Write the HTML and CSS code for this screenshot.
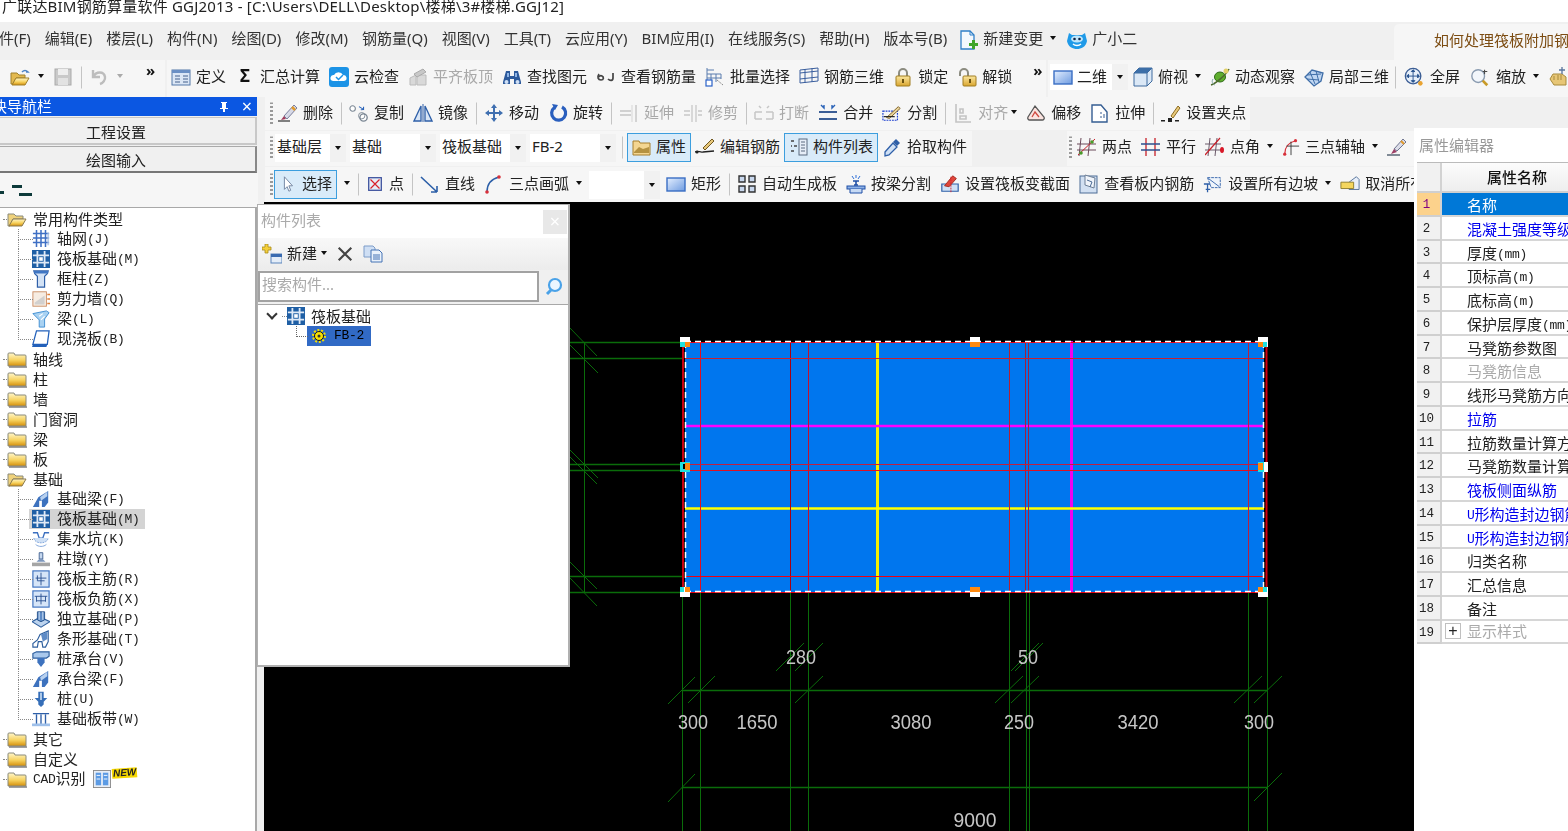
FILE: index.html
```html
<!DOCTYPE html>
<html lang="zh-CN">
<head>
<meta charset="utf-8">
<title>广联达BIM钢筋算量软件 GGJ2013</title>
<link rel="stylesheet" href="styles.css">
</head>
<body>
<svg class="defs" aria-hidden="true">
  <defs>
    <linearGradient id="gf" x1="0" y1="0" x2="0" y2="1"><stop offset="0" stop-color="#fff7cc"/><stop offset=".55" stop-color="#f7d25e"/><stop offset="1" stop-color="#d48f0c"/></linearGradient>
    <linearGradient id="gb" x1="0" y1="0" x2="1" y2="1"><stop offset="0" stop-color="#e4efff"/><stop offset="1" stop-color="#6e9be0"/></linearGradient>
    <linearGradient id="gy" x1="0" y1="0" x2="0" y2="1"><stop offset="0" stop-color="#fbe7a0"/><stop offset="1" stop-color="#d9a52e"/></linearGradient>
  </defs>
  <symbol id="fold" viewBox="0 0 20 20"><path d="M1 5a1 1 0 0 1 1-1h5l1 2h10a1 1 0 0 1 1 1v10H1z" fill="url(#gf)" stroke="#8a8a7a"/><path d="M2 18h18" stroke="#777" stroke-width="1.4"/></symbol>
  <symbol id="foldo" viewBox="0 0 20 20"><path d="M1 5h6l2 2h7v3H6L3 17H1z" fill="#efd27c" stroke="#8a8a7a"/><path d="M6 10h13l-4 7H2z" fill="url(#gf)" stroke="#8a7a50"/></symbol>
  <symbol id="fopen" viewBox="0 0 20 20"><path d="M1 6h6l2 2h6v3H6L3 17H1z" fill="#e3b94f" stroke="#a0802c"/><path d="M6 11h13l-4 7H2z" fill="url(#gf)" stroke="#a0802c"/><path d="M12 5c2-2 4-2 6 0l-2 0" fill="none" stroke="#4d83c6" stroke-width="1.5"/></symbol>
  <symbol id="save" viewBox="0 0 20 20"><rect x="2" y="2" width="16" height="16" fill="#c9c9c9" stroke="#aaa"/><rect x="5" y="2" width="10" height="6" fill="#eee"/><rect x="5" y="11" width="10" height="7" fill="#e2e2e2"/></symbol>
  <symbol id="undo" viewBox="0 0 20 20"><path d="M4 3v7h7M4 10c3-6 11-6 12 0 .5 3-2 6-5 7" fill="none" stroke="#bdbdbd" stroke-width="2.4"/></symbol>
  <symbol id="def" viewBox="0 0 20 20"><rect x="1" y="3" width="18" height="15" fill="#dbe6f5" stroke="#5578a8"/><rect x="1" y="3" width="18" height="3" fill="#6a8fc4"/><path d="M4 9h5M4 12h5M4 15h5M12 9h5M12 12h5M12 15h5" stroke="#44618c"/></symbol>
  <symbol id="cloud" viewBox="0 0 20 20"><rect x="0" y="0" width="20" height="20" rx="3" fill="#1c93e6"/><path d="M4 14a3 3 0 0 1 1-6 5 5 0 0 1 9 0 3 3 0 0 1 1 6z" fill="#fff"/><path d="M7 10l2.500 2.500L14 8" fill="none" stroke="#1c93e6" stroke-width="1.5"/></symbol>
  <symbol id="flat" viewBox="0 0 20 20"><path d="M2 18V11l6-3v10zM9 18V8h9v10z" fill="#d9d9d9" stroke="#bbb"/><path d="M6 7l9-5 3 3-9 5z" fill="#c8c8c8" stroke="#aaa"/></symbol>
  <symbol id="bino" viewBox="0 0 20 20"><path d="M1 15l3-11h4v5h4V4h4l3 11v2h-7v-5H8v5H1z" fill="#2d5a9c"/><circle cx="4.500" cy="15" r="2" fill="#cfe0f6"/><circle cx="15.500" cy="15" r="2" fill="#cfe0f6"/><path d="M5 6h2v4H5zM13 6h2v4h-2z" fill="#8eb4e6"/></symbol>
  <symbol id="glass" viewBox="0 0 20 20"><path d="M3 7c-2 3-1 6 2 6s3-3 1-4-3 1-3 1M17 6v5c0 3-3 3-5 1" fill="none" stroke="#444" stroke-width="1.700"/></symbol>
  <symbol id="batch" viewBox="0 0 20 20"><path d="M2 1v13M2 3h7M2 7h14M2 11h14M6 7v7M11 7v8M16 7v5" fill="none" stroke="#5b7cae"/><rect x="1" y="13" width="6" height="6" fill="#fff" stroke="#2a62c8" stroke-width="1.200"/><path d="M12 13l6 5" stroke="#888" stroke-dasharray="2 1"/></symbol>
  <symbol id="r3d" viewBox="0 0 20 20"><path d="M1 3v13M19 1v13M1 6l18-2M1 12l18-2M6 2v14M13 1v14M1 16l18-2M1 3l18-2" fill="none" stroke="#3b5f9e"/></symbol>
  <symbol id="lock" viewBox="0 0 20 20"><path d="M6 9V6a4 4 0 0 1 8 0v3" fill="none" stroke="#8c8c80" stroke-width="2"/><rect x="3" y="9" width="14" height="10" rx="1" fill="url(#gy)" stroke="#a07c20"/><rect x="9" y="12" width="2" height="4" fill="#6b5210"/></symbol>
  <symbol id="unlock" viewBox="0 0 20 20"><path d="M3 9V6a4 4 0 0 1 8 0v3" fill="none" stroke="#8c8c80" stroke-width="2"/><rect x="6" y="9" width="13" height="10" rx="1" fill="url(#gy)" stroke="#a07c20"/><rect x="12" y="12" width="2" height="4" fill="#6b5210"/></symbol>
  <symbol id="r2d" viewBox="0 0 20 20"><rect x="1" y="4" width="18" height="13" fill="url(#gb)" stroke="#3a6ec4" stroke-width="1.400"/></symbol>
  <symbol id="cube" viewBox="0 0 20 20"><path d="M1 6l5-5h13v13l-5 5H1z" fill="#dbe8f6" stroke="#3e6a9e"/><path d="M1 6h13v13M14 6l5-5" fill="none" stroke="#3e6a9e"/><path d="M6 1h13l-5 5H1z" fill="#3d6fa8"/></symbol>
  <symbol id="orbit" viewBox="0 0 20 20"><ellipse cx="10" cy="10" rx="5.500" ry="5" fill="#5fae2e" stroke="#2f6c18"/><path d="M1 18C5 17 16 8 19 2" fill="none" stroke="#4d6a2c" stroke-width="1.500"/><circle cx="16" cy="4" r="2.500" fill="#e3d06a"/><path d="M3 12c-2 3 0 5 2 6" fill="none" stroke="#8aa"/></symbol>
  <symbol id="loc3d" viewBox="0 0 20 20"><path d="M1 10l7-7 11 3-2 8-7 5z" fill="#bfd6f2" stroke="#3f6ea8" stroke-width="1.300"/><path d="M6 5l5 12M12 4l3 11M3 8l14-1M3 12l12 1" stroke="#3f6ea8"/></symbol>
  <symbol id="full" viewBox="0 0 22 22"><circle cx="10" cy="10" r="8.500" fill="#e6effa" stroke="#3b5d94" stroke-width="1.500"/><path d="M10 4v12M4 10h12M10 3l-2 2h4zM10 17l-2-2h4zM3 10l2-2v4zM17 10l-2-2v4z" stroke="#24508c" fill="#24508c"/><circle cx="18" cy="18" r="2.500" fill="#e9a331"/></symbol>
  <symbol id="zoom" viewBox="0 0 22 22"><circle cx="9" cy="10" r="7" fill="#f2f6fb" stroke="#8a9bb0" stroke-width="1.500"/><path d="M14 15l5 5" stroke="#c89a28" stroke-width="3"/><path d="M16 3v5M14 5h5" stroke="#4a4a4a" stroke-width="1.200"/></symbol>
  <symbol id="hand" viewBox="0 0 20 20"><path d="M2 12l3-5h9l4 3v8H6z" fill="#e7c676" stroke="#a78a3c"/><path d="M6 9v4M10 8v5M13 8v5" stroke="#a78a3c"/><path d="M14 0v7M11 3h6" stroke="#58749c" stroke-width="1.300"/></symbol>
  <symbol id="erase" viewBox="0 0 20 20"><path d="M6 13L16 2l3 3L9 16z" fill="#d7d9e6" stroke="#7a7f9c"/><path d="M14 4l3 3" stroke="#e29b2c" stroke-width="2.500"/><path d="M6 13l-3 4 5-1z" fill="#a03a5a"/><path d="M0 18h12" stroke="#333" stroke-width="1.200"/></symbol>
  <symbol id="copy" viewBox="0 0 22 20"><circle cx="4" cy="5" r="3" fill="#fff" stroke="#7b8794" stroke-width="1.200"/><circle cx="16" cy="15" r="4" fill="#fff" stroke="#7b8794" stroke-width="1.500"/><circle cx="14" cy="13" r="3.500" fill="none" stroke="#7b8794"/><path d="M11 3l5 3v-3M16 6l-3 .5" stroke="#2a63b8" fill="none" stroke-width="1.200"/></symbol>
  <symbol id="mirror" viewBox="0 0 20 20"><path d="M8 3L1 18h7zM12 3l7 15h-7z" fill="#d8e5f6" stroke="#2e5fa8" stroke-width="1.300"/><path d="M10 1v18" stroke="#2e5fa8"/></symbol>
  <symbol id="move" viewBox="0 0 20 20"><path d="M10 1l3 4h-2v4h4V7l4 3-4 3v-2h-4v4h2l-3 4-3-4h2v-4H5v2l-4-3 4-3v2h4V5H7z" fill="#3f6fb0"/></symbol>
  <symbol id="rot" viewBox="0 0 20 20"><path d="M6.500 4.500A7 7 0 1 0 14 4" fill="none" stroke="#2a5fbe" stroke-width="3.200"/><path d="M4 1l6 1-3 5z" fill="#2a5fbe"/></symbol>
  <symbol id="ext" viewBox="0 0 20 20"><path d="M17 2v17M1 8h11M1 12h11" stroke="#c5c5c5" stroke-width="1.400" fill="none"/><path d="M13 2v17" stroke="#d6d6d6"/></symbol>
  <symbol id="trim" viewBox="0 0 20 20"><path d="M9 2v17M13 2v17M1 8h6M1 12h6M15 8h4M15 12h4" stroke="#c8c8c8" stroke-width="1.300" fill="none"/></symbol>
  <symbol id="brk" viewBox="0 0 20 20"><path d="M1 9h7M12 9h7M1 16h7M12 16h7M1 9v7M19 9v7M5 3l2 2M15 3l-2 2" stroke="#c6c6c6" stroke-width="1.500" fill="none"/></symbol>
  <symbol id="merge" viewBox="0 0 20 20"><path d="M1 9h18M1 16h18" stroke="#3b5e96" stroke-width="1.800" fill="none"/><path d="M3 2l3 3 0-3M17 2l-3 3 0-3" stroke="#2a63b8" fill="none" stroke-width="1.400"/></symbol>
  <symbol id="split" viewBox="0 0 22 20"><rect x="1" y="8" width="16" height="10" fill="none" stroke="#1c3fd0" stroke-dasharray="2 1" stroke-width="1.300"/><path d="M5 15L18 3l2 2L8 16z" fill="#e9d49a" stroke="#7a5c20"/><path d="M2 14h12" stroke="#222" stroke-width="1.300"/></symbol>
  <symbol id="align" viewBox="0 0 20 20"><path d="M3 1v18h15M7 13h6v3H7zM7 6h3v4H7z" fill="none" stroke="#c4c4c4" stroke-width="1.600"/></symbol>
  <symbol id="off" viewBox="0 0 20 20"><path d="M2 14L9 3l9 11a2 2 0 0 1-2 3H4a2 2 0 0 1-2-3z" fill="#fbe4e0" stroke="#555" stroke-width="1.300"/><path d="M6 14l3-5 4 5" fill="none" stroke="#d04a40" stroke-width="1.300"/></symbol>
  <symbol id="str" viewBox="0 0 20 20"><path d="M2 2h9l6 7v10H2z" fill="#fff" stroke="#355d92" stroke-width="1.400"/><path d="M11 9v2M11 13v2M14 11v4" stroke="#355d92"/></symbol>
  <symbol id="grip2" viewBox="0 0 20 20"><path d="M10 13L17 3l2 2-7 10z" fill="#e8c97a" stroke="#8b6b22"/><rect x="0" y="17" width="4" height="1.500" fill="#222"/><rect x="7" y="15" width="4" height="4" fill="#222"/><rect x="14" y="17" width="4" height="1.500" fill="#222"/></symbol>
  <symbol id="prop" viewBox="0 0 20 20"><path d="M1 4h6l1 2h10v12H1z" fill="#f4d691" stroke="#a77f2c"/><path d="M2 15l5-5 4 2 6-2v6H2z" fill="#b59241"/></symbol>
  <symbol id="edit" viewBox="0 0 20 20"><path d="M8 11L17 2l2 2-9 9z" fill="#e7c77a" stroke="#705820"/><path d="M0 15c3-2 5 1 8 0l11-1" fill="none" stroke="#222" stroke-width="1.300"/><circle cx="2" cy="15" r="1.600" fill="#222"/></symbol>
  <symbol id="list" viewBox="0 0 20 20"><rect x="10" y="2" width="8" height="16" fill="#e6eef8" stroke="#5a6b80"/><path d="M12 5h4M12 8h4M12 11h4M12 14h4" stroke="#5a6b80"/><path d="M2 4h3M5 9h3M2 9h1M2 14h3" stroke="#444" stroke-width="1.500"/></symbol>
  <symbol id="pick" viewBox="0 0 20 20"><path d="M3 15L11 6l4 4-8 8-4 1z" fill="#cfe0f5" stroke="#2e5fa8" stroke-width="1.300"/><path d="M11 5l3-3 4 4-3 3z" fill="#2e5fa8"/></symbol>
  <symbol id="two" viewBox="0 0 20 20"><path d="M4 1l-2 18M13 1l-2 18M0 7h19M0 13h19" stroke="#6b4a5a" fill="none"/><path d="M1 18L18 2" stroke="#c8202a"/><circle cx="4" cy="16" r="1.800" fill="#4a9a2a"/><circle cx="15" cy="5" r="1.800" fill="#4a9a2a"/></symbol>
  <symbol id="par" viewBox="0 0 20 20"><path d="M5 1v18M14 1v18" stroke="#c8202a" stroke-width="1.300"/><path d="M0 7h19M0 13h19" stroke="#2e4f8e" stroke-width="1.300"/></symbol>
  <symbol id="ang" viewBox="0 0 20 20"><path d="M5 1L3 19M12 1l-2 18M0 7h16M0 13h16" stroke="#6b5a6a" fill="none"/><path d="M0 18L15 1" stroke="#c8202a" stroke-width="1.200"/><ellipse cx="17" cy="13" rx="2" ry="3" fill="#d81828"/></symbol>
  <symbol id="arc3" viewBox="0 0 20 20"><path d="M3 18c0-8 4-13 12-15" fill="none" stroke="#d8303a" stroke-width="1.300"/><circle cx="3" cy="18" r="1.800" fill="#d8303a"/><circle cx="15" cy="3" r="1.800" fill="#d8303a"/><path d="M10 4v15M5 9h14" stroke="#333"/></symbol>
  <symbol id="brush" viewBox="0 0 20 20"><path d="M7 12L16 2l3 3-9 9z" fill="#dcdde8" stroke="#6f7590"/><path d="M14 4l3 3" stroke="#e29b2c" stroke-width="2"/><path d="M7 12l-3 5 6-2z" fill="#9c3f66"/><path d="M0 18h13" stroke="#345" stroke-width="1.200"/></symbol>
  <symbol id="cur" viewBox="0 0 20 20"><path d="M6 2v14l3-3 2 5 2-1-2-5h4z" fill="#fff" stroke="#6c7f9c"/></symbol>
  <symbol id="pt" viewBox="0 0 20 20"><rect x="3" y="3" width="14" height="14" fill="#e6ecf6" stroke="#3a4f9c" stroke-width="1.400"/><path d="M5 5l10 10M15 5L5 15" stroke="#d8202a" stroke-width="1.300"/></symbol>
  <symbol id="line" viewBox="0 0 20 20"><path d="M1 3l16 15M17 18h-6M17 18v-6" fill="none" stroke="#2c5fa8" stroke-width="1.600"/></symbol>
  <symbol id="arc" viewBox="0 0 20 20"><path d="M3 18c0-8 4-13 12-15" fill="none" stroke="#2c5fa8" stroke-width="1.500"/><circle cx="3" cy="18" r="1.800" fill="#d8303a"/><circle cx="15" cy="3" r="1.800" fill="#d8303a"/></symbol>
  <symbol id="auto" viewBox="0 0 20 20"><path d="M2 2h6v6H2zM12 2h6v6h-6zM2 12h6v6H2zM12 12h6v6h-6z" fill="#c9d8ee" stroke="#333" stroke-width="1.400"/></symbol>
  <symbol id="beam" viewBox="0 0 20 20"><path d="M7 7h6M8 11h4M10 7v4" stroke="#1f4fa6" stroke-width="1.600"/><rect x="1" y="12" width="18" height="3" fill="#8eb2e6" stroke="#1f4fa6"/><path d="M4 15v4h12v-4" fill="#c7daf4" stroke="#1f4fa6"/><path d="M6 2l2 3M14 2l-2 3M10 1v3" stroke="#2c6fd8"/></symbol>
  <symbol id="sect" viewBox="0 0 22 20"><path d="M2 10h18v8H2z" fill="#cfe0f5" stroke="#2e5fa8" stroke-width="1.300"/><path d="M5 12L14 1l4 3-8 9z" fill="#e0453a" stroke="#a02a20"/><path d="M12 2v17" stroke="#d8202a" stroke-dasharray="2 1"/></symbol>
  <symbol id="view" viewBox="0 0 20 20"><rect x="1" y="2" width="17" height="17" fill="#d2e0f2" stroke="#4d6c96"/><path d="M6 1l10 3-1 10-9-3z" fill="#f0f4fa" stroke="#6d7f96"/><path d="M8 6l5 2-2 5" fill="none" stroke="#4d6c96"/></symbol>
  <symbol id="slope" viewBox="0 0 22 20"><path d="M5 3h14v11H9z" fill="#eef4fb" stroke="#2e5fa8" stroke-dasharray="3 1"/><path d="M1 10h7M5 10v9M3 16h5" stroke="#2e5fa8" stroke-width="1.400"/><path d="M6 4l12 9" stroke="#2e5fa8"/></symbol>
  <symbol id="canc" viewBox="0 0 22 20"><path d="M10 8l8-6 3 3v11H10z" fill="#e9f0fa" stroke="#4d6c96"/><path d="M1 8h14v7H1z" fill="#f4d65e" stroke="#8b7a2a"/></symbol>
  <symbol id="grid" viewBox="0 0 20 20"><path d="M1 4h18M1 9h18M1 14h18M5 0v19M10 0v19M15 0v19" stroke="#3e6fc4" stroke-width="1.700"/><path d="M17 3h2v14h-2z" fill="#a9bfe4" opacity=".8"/></symbol>
  <symbol id="raft" viewBox="0 0 20 20"><rect x="0" y="0" width="20" height="20" fill="#1f5fa5"/><path d="M6 1v18M14 1v18M1 6h18M1 14h18" stroke="#dfe9f6" stroke-width="2"/><rect x="8" y="8" width="4" height="4" fill="#fff"/></symbol>
  <symbol id="colm" viewBox="0 0 20 20"><path d="M2 1h16l-1 3-3 3v12H6V7L3 4z" fill="#d3e2f5" stroke="#2e5fa8" stroke-width="1.300"/><path d="M2 1h16v3H3z" fill="#3f76c4"/></symbol>
  <symbol id="wall" viewBox="0 0 20 20"><rect x="1" y="2" width="15" height="16" fill="#f6ece2" stroke="#c98a60"/><path d="M3 14l11-8v10H3z" fill="#c9c9c9" opacity=".8"/><path d="M17 5h3M17 10h3M17 15h3" stroke="#e0803a" stroke-width="1.600"/></symbol>
  <symbol id="bm" viewBox="0 0 20 20"><path d="M1 4l15-3 3 2-5 7v9H8V11z" fill="#a9d2f2" stroke="#3a8ad0"/><path d="M8 7l4-3M10 11l4-4" stroke="#fff" stroke-width="1.300"/></symbol>
  <symbol id="slab" viewBox="0 0 20 20"><path d="M5 1h14l-2 15H1z" fill="#fff" stroke="#2260ba" stroke-width="1.400"/><path d="M1 16h16l-1 3H0z" fill="#2260ba"/></symbol>
  <symbol id="fbm" viewBox="0 0 20 20"><path d="M1 19L7 8l11-7v13l-4 5h-3v-7H8v7z" fill="#3d72be"/><path d="M9 8l8-6v5l-7 5z" fill="#b7d0ef"/></symbol>
  <symbol id="sump" viewBox="0 0 20 20"><path d="M1 3h5l2 6h4l2-6h5" fill="none" stroke="#3a6fc0" stroke-width="1.500"/><path d="M2 9c1 7 15 7 16 0" fill="#cfe0f5" stroke="#7aa0d8" stroke-dasharray="2 1"/><path d="M4 16c3 3 9 3 12 0" stroke="#7aa0d8" fill="none"/></symbol>
  <symbol id="pier" viewBox="0 0 20 20"><path d="M8 3h4v7H8z" fill="#c6d8ef" stroke="#3e5f8e"/><path d="M5 13l3-3h4l3 3z" fill="#7d97bd"/><rect x="0" y="14" width="20" height="4" fill="#a5a5a5"/></symbol>
  <symbol id="mbar" viewBox="0 0 20 20"><rect x="1" y="1" width="18" height="18" fill="#d6e5f8" stroke="#3f72c0" stroke-width="1.300"/><path d="M10 3v14M4 9h12M6 6v6h8" fill="none" stroke="#284f90"/></symbol>
  <symbol id="nbar" viewBox="0 0 20 20"><rect x="1" y="1" width="18" height="18" fill="#d6e5f8" stroke="#3f72c0" stroke-width="1.300"/><path d="M10 4v12M3 7h14M5 7v6M15 7v6M5 12h10" fill="none" stroke="#284f90"/></symbol>
  <symbol id="iso" viewBox="0 0 20 20"><path d="M0 13l9-5 11 5-10 6z" fill="#bcd3ee" stroke="#2e5f9e" stroke-width="1.200"/><path d="M6 2h8v9l-4 2-4-2z" fill="#5e8bc6" stroke="#244f88"/><path d="M8 2v9M12 2v9" stroke="#d6e6f8"/></symbol>
  <symbol id="strip" viewBox="0 0 20 20"><path d="M1 19v-4l5-4 3-6 9-4v12l-3 6h-3l-1-6H7l-1 6z" fill="#fff" stroke="#2e5f9e" stroke-width="1.300"/><path d="M10 5l7-3v8l-5 3z" fill="#5e8bc6"/></symbol>
  <symbol id="cap" viewBox="0 0 20 20"><path d="M1 4l4-2h14v5l-3 2H1z" fill="#a9c8ec" stroke="#2e5f9e" stroke-width="1.300"/><path d="M6 9h8v5l-4 5-4-5z" fill="#3d72be"/></symbol>
  <symbol id="pile" viewBox="0 0 20 20"><path d="M7 2h6v7h4l-4 4v3l-3 3-3-3v-3L3 9h4z" fill="#356eb8"/><path d="M9 3h2v8H9z" fill="#bcd3ee"/></symbol>
  <symbol id="band" viewBox="0 0 20 20"><path d="M1 4h18M0 17h20M5 5v11M10 5v11M15 5v11" stroke="#2e5fa8" stroke-width="1.500"/><path d="M0 15h20v3H0z" fill="#9fc0ea"/></symbol>
  <symbol id="cols" viewBox="0 0 20 20"><rect x="0.500" y="0.500" width="19" height="19" fill="#e8eef6" stroke="#888"/><rect x="3" y="3" width="6" height="14" fill="#5c9be4"/><rect x="11" y="3" width="6" height="14" fill="#5c9be4"/><path d="M4 6h4M4 10h4M12 6h4M12 10h4" stroke="#fff"/></symbol>
  <symbol id="newc" viewBox="0 0 20 20"><path d="M0 3h3V0h3v3h3v3H6v3H3V6H0z" fill="#f4cf3a" stroke="#a88a1a" stroke-width=".8"/><rect x="9" y="10" width="11" height="9" fill="#e4edf8" stroke="#5b84bc"/><rect x="9" y="10" width="11" height="3" fill="#3a6bb0"/></symbol>
  <symbol id="close" viewBox="0 0 20 20"><path d="M3 3l14 14M17 3L3 17" stroke="#444" stroke-width="2.400"/></symbol>
  <symbol id="dup" viewBox="0 0 20 20"><path d="M1 2h9l2 2v9H1z" fill="#cfdff4" stroke="#7d9cc8"/><path d="M8 6h8l3 3v9H8z" fill="#e9f1fb" stroke="#4572b4"/><path d="M10 11h7M10 13h7M10 15h7" stroke="#4572b4"/></symbol>
  <symbol id="find" viewBox="0 0 20 20"><circle cx="11" cy="8" r="6" fill="#eaf5ff" stroke="#4aa2e8" stroke-width="2.200"/><path d="M7 13l-4 4" stroke="#4aa2e8" stroke-width="3"/></symbol>
  <symbol id="gear" viewBox="0 0 14 14"><circle cx="7" cy="7" r="4.500" fill="#f7e000" stroke="#111" stroke-width="1"/><circle cx="7" cy="7" r="6" fill="none" stroke="#f7e000" stroke-width="2" stroke-dasharray="2 1.700"/><circle cx="7" cy="7" r="1.500" fill="#333"/></symbol>
  <symbol id="ndoc" viewBox="0 0 20 20"><path d="M3 1h9l4 4v14H3z" fill="#f3f8fd" stroke="#2f7fc8" stroke-width="1.300"/><path d="M12 1v4h4" fill="none" stroke="#2f7fc8"/><path d="M11 13h3v-3h3v3h3v3h-3v3h-3v-3h-3z" fill="#3fa52a"/></symbol>
  <symbol id="masc" viewBox="0 0 20 20"><path d="M2 3l3 2h10l3-2 2 8c-1 6-6 8-10 8s-9-2-10-8z" fill="#1f9ae8"/><ellipse cx="10" cy="9" rx="6" ry="3.500" fill="#bfe6fb"/><circle cx="7.500" cy="9" r="1.300" fill="#124"/><circle cx="12.500" cy="9" r="1.300" fill="#124"/><path d="M6 14c2 2 6 2 8 0" fill="none" stroke="#fff" stroke-width="1.300"/></symbol>
  <symbol id="pin" viewBox="0 0 12 12"><path d="M3 1h6v1H8v5h2v1H7v3H5V8H2V7h2V2H3z" fill="#fff"/></symbol>
</svg>

<header class="titlebar">广联达BIM钢筋算量软件 GGJ2013 - [C:\Users\DELL\Desktop\楼梯\3#楼梯.GGJ12]</header>

<nav class="menubar">
  <span class="mi">文件(F)</span><span class="mi">编辑(E)</span><span class="mi">楼层(L)</span><span class="mi">构件(N)</span><span class="mi">绘图(D)</span><span class="mi">修改(M)</span><span class="mi">钢筋量(Q)</span><span class="mi">视图(V)</span><span class="mi">工具(T)</span><span class="mi">云应用(Y)</span><span class="mi">BIM应用(I)</span><span class="mi">在线服务(S)</span><span class="mi">帮助(H)</span><span class="mi">版本号(B)</span>
  <span class="it"><svg class="ic"><use href="#ndoc"/></svg>新建变更<i class="caret"></i></span>
  <span class="it"><svg class="ic"><use href="#masc"/></svg>广小二</span>
  <span class="tip">如何处理筏板附加钢筋</span>
</nav>

<div class="tb1">
  <div class="grp g1a">
    <svg class="ic"><use href="#fopen"/></svg><i class="caret"></i>
    <svg class="ic"><use href="#save"/></svg><i class="sep"></i>
    <svg class="ic"><use href="#undo"/></svg><i class="caret off"></i>
    <span class="more">»</span>
  </div>
  <div class="grp g1b">
    <span class="it"><svg class="ic"><use href="#def"/></svg>定义</span>
    <span class="it"><span class="sigma">Σ</span>汇总计算</span>
    <span class="it"><svg class="ic"><use href="#cloud"/></svg>云检查</span>
    <span class="it off"><svg class="ic"><use href="#flat"/></svg>平齐板顶</span>
    <span class="it"><svg class="ic"><use href="#bino"/></svg>查找图元</span>
    <span class="it"><svg class="ic"><use href="#glass"/></svg>查看钢筋量</span>
    <span class="it"><svg class="ic"><use href="#batch"/></svg>批量选择</span>
    <span class="it"><svg class="ic"><use href="#r3d"/></svg>钢筋三维</span>
    <span class="it"><svg class="ic"><use href="#lock"/></svg>锁定</span>
    <span class="it"><svg class="ic"><use href="#unlock"/></svg>解锁</span>
    <span class="more m2">»</span>
  </div>
  <div class="grp g1c">
    <span class="combo c2d"><span class="cbox it"><svg class="ic"><use href="#r2d"/></svg>二维</span><span class="carr"><i class="caret"></i></span></span>
    <span class="it"><svg class="ic"><use href="#cube"/></svg>俯视<i class="caret"></i></span>
    <span class="it"><svg class="ic"><use href="#orbit"/></svg>动态观察</span>
    <span class="it"><svg class="ic"><use href="#loc3d"/></svg>局部三维</span>
    <i class="sep s3"></i>
    <span class="it"><svg class="ic w22"><use href="#full"/></svg>全屏</span>
    <span class="it"><svg class="ic w22"><use href="#zoom"/></svg>缩放<i class="caret"></i></span>
    <span class="it"><svg class="ic"><use href="#hand"/></svg></span>
  </div>
</div>

<div class="work">
  <aside class="nav">
    <div class="navhead"><span>模块导航栏</span><svg class="pin"><use href="#pin"/></svg><span class="navx">×</span></div>
    <div class="navbtn">工程设置</div>
    <div class="navbtn dark">绘图输入</div>
    <div class="navtools"><i class="d1"></i><i class="d2"></i><i class="d3"></i></div>
    <div class="tree">
      <div class="n0"><svg class="fi"><use href="#foldo"/></svg><span>常用构件类型</span></div>
      <div class="n1"><svg class="ti"><use href="#grid"/></svg><span>轴网<span class="lat">(J)</span></span></div>
      <div class="n1"><svg class="ti"><use href="#raft"/></svg><span>筏板基础<span class="lat">(M)</span></span></div>
      <div class="n1"><svg class="ti"><use href="#colm"/></svg><span>框柱<span class="lat">(Z)</span></span></div>
      <div class="n1"><svg class="ti"><use href="#wall"/></svg><span>剪力墙<span class="lat">(Q)</span></span></div>
      <div class="n1"><svg class="ti"><use href="#bm"/></svg><span>梁<span class="lat">(L)</span></span></div>
      <div class="n1 last"><svg class="ti"><use href="#slab"/></svg><span>现浇板<span class="lat">(B)</span></span></div>
      <div class="n0"><svg class="fi"><use href="#fold"/></svg><span>轴线</span></div>
      <div class="n0"><svg class="fi"><use href="#fold"/></svg><span>柱</span></div>
      <div class="n0"><svg class="fi"><use href="#fold"/></svg><span>墙</span></div>
      <div class="n0"><svg class="fi"><use href="#fold"/></svg><span>门窗洞</span></div>
      <div class="n0"><svg class="fi"><use href="#fold"/></svg><span>梁</span></div>
      <div class="n0"><svg class="fi"><use href="#fold"/></svg><span>板</span></div>
      <div class="n0"><svg class="fi"><use href="#foldo"/></svg><span>基础</span></div>
      <div class="n1"><svg class="ti"><use href="#fbm"/></svg><span>基础梁<span class="lat">(F)</span></span></div>
      <div class="n1"><span class="sel"><svg class="ti"><use href="#raft"/></svg><span>筏板基础<span class="lat">(M)</span></span></span></div>
      <div class="n1"><svg class="ti"><use href="#sump"/></svg><span>集水坑<span class="lat">(K)</span></span></div>
      <div class="n1"><svg class="ti"><use href="#pier"/></svg><span>柱墩<span class="lat">(Y)</span></span></div>
      <div class="n1"><svg class="ti"><use href="#mbar"/></svg><span>筏板主筋<span class="lat">(R)</span></span></div>
      <div class="n1"><svg class="ti"><use href="#nbar"/></svg><span>筏板负筋<span class="lat">(X)</span></span></div>
      <div class="n1"><svg class="ti"><use href="#iso"/></svg><span>独立基础<span class="lat">(P)</span></span></div>
      <div class="n1"><svg class="ti"><use href="#strip"/></svg><span>条形基础<span class="lat">(T)</span></span></div>
      <div class="n1"><svg class="ti"><use href="#cap"/></svg><span>桩承台<span class="lat">(V)</span></span></div>
      <div class="n1"><svg class="ti"><use href="#fbm"/></svg><span>承台梁<span class="lat">(F)</span></span></div>
      <div class="n1"><svg class="ti"><use href="#pile"/></svg><span>桩<span class="lat">(U)</span></span></div>
      <div class="n1 last"><svg class="ti"><use href="#band"/></svg><span>基础板带<span class="lat">(W)</span></span></div>
      <div class="n0"><svg class="fi"><use href="#fold"/></svg><span>其它</span></div>
      <div class="n0"><svg class="fi"><use href="#fold"/></svg><span>自定义</span></div>
      <div class="n0"><svg class="fi"><use href="#fold"/></svg><span><span class="lat">CAD</span>识别</span><svg class="ti cadi"><use href="#cols"/></svg><span class="newtag">NEW</span></div>
    </div>
  </aside>

  <main class="main">
    <div class="row r2">
      <div class="grp g2a">
        <i class="gripbar"></i>
        <span class="it"><svg class="ic"><use href="#erase"/></svg>删除</span><i class="sep"></i>
        <span class="it"><svg class="ic"><use href="#copy"/></svg>复制</span>
        <span class="it"><svg class="ic"><use href="#mirror"/></svg>镜像</span><i class="sep"></i>
        <span class="it"><svg class="ic"><use href="#move"/></svg>移动</span>
        <span class="it"><svg class="ic"><use href="#rot"/></svg>旋转</span><i class="sep"></i>
        <span class="it off"><svg class="ic"><use href="#ext"/></svg>延伸</span>
        <span class="it off"><svg class="ic"><use href="#trim"/></svg>修剪</span><i class="sep"></i>
        <span class="it off"><svg class="ic"><use href="#brk"/></svg>打断</span>
        <span class="it"><svg class="ic"><use href="#merge"/></svg>合并</span>
        <span class="it"><svg class="ic"><use href="#split"/></svg>分割</span><i class="sep"></i>
        <span class="it off"><svg class="ic"><use href="#align"/></svg>对齐<i class="caret tight"></i></span>
        <span class="it"><svg class="ic"><use href="#off"/></svg>偏移</span>
        <span class="it"><svg class="ic"><use href="#str"/></svg>拉伸</span><i class="sep"></i>
        <span class="it"><svg class="ic"><use href="#grip2"/></svg>设置夹点</span>
      </div>
    </div>

    <div class="row r3">
      <div class="grp g3a">
        <i class="gripbar"></i>
        <div class="combos">
          <span class="combo"><span class="cbox w55">基础层</span><span class="carr"><i class="caret"></i></span></span>
          <span class="combo"><span class="cbox w70">基础</span><span class="carr"><i class="caret"></i></span></span>
          <span class="combo"><span class="cbox w70">筏板基础</span><span class="carr"><i class="caret"></i></span></span>
          <span class="combo"><span class="cbox w70">FB-2</span><span class="carr"><i class="caret"></i></span></span>
        </div>
        <i class="sep s2"></i>
        <span class="it btn"><svg class="ic"><use href="#prop"/></svg>属性</span>
        <span class="it"><svg class="ic"><use href="#edit"/></svg>编辑钢筋</span>
        <span class="it btn"><svg class="ic"><use href="#list"/></svg>构件列表</span>
        <span class="it"><svg class="ic"><use href="#pick"/></svg>拾取构件</span>
      </div>
      <div class="grp g3b">
        <i class="gripbar"></i>
        <span class="it"><svg class="ic"><use href="#two"/></svg>两点</span>
        <span class="it"><svg class="ic"><use href="#par"/></svg>平行</span>
        <span class="it"><svg class="ic"><use href="#ang"/></svg>点角<i class="caret"></i></span>
        <span class="it"><svg class="ic w18"><use href="#arc3"/></svg>三点辅轴<i class="caret"></i></span>
        <span class="it"><svg class="ic"><use href="#brush"/></svg></span>
      </div>
    </div>

    <div class="row r4">
      <div class="grp g4a">
        <i class="gripbar gb4"></i>
        <span class="it btn b4"><svg class="ic w18"><use href="#cur"/></svg>选择</span><i class="caret"></i><i class="sep s4"></i>
        <span class="it"><svg class="ic w18"><use href="#pt"/></svg>点</span><i class="sep"></i>
        <span class="it"><svg class="ic"><use href="#line"/></svg>直线</span>
        <span class="it"><svg class="ic"><use href="#arc"/></svg>三点画弧<i class="caret"></i></span>
        <span class="combo c4"><span class="cbox w55"></span><span class="carr"><i class="caret"></i></span></span>
        <span class="it"><svg class="ic"><use href="#r2d"/></svg>矩形</span><i class="sep"></i>
        <span class="it"><svg class="ic"><use href="#auto"/></svg>自动生成板</span>
        <span class="it"><svg class="ic"><use href="#beam"/></svg>按梁分割</span>
        <span class="it"><svg class="ic"><use href="#sect"/></svg>设置筏板变截面</span>
        <span class="it"><svg class="ic"><use href="#view"/></svg>查看板内钢筋</span>
        <span class="it"><svg class="ic"><use href="#slope"/></svg>设置所有边坡<i class="caret"></i></span>
        <span class="it"><svg class="ic"><use href="#canc"/></svg>取消所有边坡</span>
      </div>
    </div>

    <div class="canvas">
      <svg class="draw" viewBox="264 202 1304 629" aria-label="绘图区">
        <g class="gl">
          <path class="glh" d="M560 342.500H682M560 358.500H682M560 464.500H682M560 470.500H682M560 576.500H682M560 592.500H682M682 690.500H1267M682 787.500H1267"/>
          <path d="M584.500 342V593M570 328L597 356M570 345L598 373M570 450L598 478M570 457L597 484M570 562L597 589M570 578L597 606"/>
          <path d="M682.500 592V831M700.500 592V831M790.500 592V831M808.500 592V831M1009.500 592V831M1026.500 592V831M1029.500 592V831M1248.500 592V831M1267.500 592V831"/>
          <path d="M668 704L695 677M688 703L715 676M795 703L823 676M995 703L1023 676M1011 703L1039 676M1234 703L1262 676M1254 703L1282 676"/>
          <path d="M776 671L804 643M795 671L823 643M1011 671L1039 643M1015 671L1043 643"/>
          <path d="M668 802L695 774M1254 801L1282 773"/>
        </g>
        <rect class="blue" x="685" y="342" width="579" height="250"/>
        <path class="yev" d="M877.500 341V592"/>
        <path class="mgv" d="M1071.500 341V592"/>
        <path class="mg" d="M685 426H1264"/>
        <path class="ye" d="M685 508.500H1264"/>
        <g class="rd">
          <path d="M700.500 342V592" stroke="#e01020"/>
          <path d="M790.500 342V592" stroke="#a80010"/>
          <path d="M808.500 342V592" stroke="#c01030"/>
          <path d="M1009.500 342V592" stroke="#b82030"/>
          <path d="M1025.500 342V592M1028.500 342V592" stroke="#a02040"/>
          <path d="M1248.500 342V592" stroke="#b82040"/>
          <path d="M685 358.500H1264" stroke="#c82030"/>
          <path d="M685 464.500H1264" stroke="#c02040"/>
          <path d="M685 470.500H1264" stroke="#e01020"/>
          <path d="M685 576.500H1264" stroke="#f00010"/>
        </g>
        <g class="edge">
          <path d="M682 342.500H1267M682 592.500H1267" stroke="#f00010"/>
          <path d="M683 342V592" stroke="#c80010" stroke-width="2"/>
          <path d="M1266.500 342V592" stroke="#d00010" stroke-width="2"/>
        </g>
        <path class="dash" d="M685 341.500H1264M685 591.500H1264M685.500 342V592M1263.500 342V592"/>
        <g>
          <rect class="hw" x="680" y="337" width="10" height="10"/><rect class="hc" x="680" y="342" width="5" height="5"/><rect class="ho" x="685" y="342" width="5" height="5"/>
          <rect class="hw" x="970" y="337" width="10" height="10"/><rect class="ho" x="970" y="342" width="10" height="5"/>
          <rect class="hw" x="1258" y="337" width="10" height="10"/><rect class="ho" x="1258" y="342" width="5" height="5"/><rect class="hc" x="1263" y="342" width="4" height="5"/>
          <rect class="hc" x="680" y="462" width="10" height="10"/><rect class="ho" x="685" y="463" width="5" height="7"/><rect class="hk" x="683" y="464" width="2" height="5"/>
          <rect class="hc" x="1258" y="462" width="10" height="10"/><rect class="ho" x="1258" y="463" width="5" height="7"/><rect class="hw" x="1264" y="462" width="4" height="10"/>
          <rect class="hw" x="680" y="587" width="10" height="10"/><rect class="hc" x="680" y="587" width="4" height="5"/><rect class="ho" x="685" y="587" width="5" height="5"/>
          <rect class="hw" x="970" y="587" width="10" height="10"/><rect class="ho" x="970" y="587" width="10" height="5"/>
          <rect class="hw" x="1258" y="587" width="10" height="10"/><rect class="ho" x="1258" y="587" width="5" height="5"/><rect class="hc" x="1263" y="587" width="4" height="5"/>
        </g>
        <g class="dim">
          <text x="801" y="664" textLength="30" lengthAdjust="spacingAndGlyphs">280</text>
          <text x="1028" y="664" textLength="20" lengthAdjust="spacingAndGlyphs">50</text>
          <text x="693" y="729" textLength="30" lengthAdjust="spacingAndGlyphs">300</text>
          <text x="757" y="729" textLength="41" lengthAdjust="spacingAndGlyphs">1650</text>
          <text x="911" y="729" textLength="41" lengthAdjust="spacingAndGlyphs">3080</text>
          <text x="1019" y="729" textLength="30" lengthAdjust="spacingAndGlyphs">250</text>
          <text x="1138" y="729" textLength="41" lengthAdjust="spacingAndGlyphs">3420</text>
          <text x="1259" y="729" textLength="30" lengthAdjust="spacingAndGlyphs">300</text>
          <text x="975" y="827" textLength="43" lengthAdjust="spacingAndGlyphs">9000</text>
        </g>
      </svg>
    </div>
  </main>
</div>

<section class="listpanel">
  <div class="ltitle"><span class="ltxt">构件列表</span><span class="lclose">×</span></div>
  <div class="ltools">
    <span class="it"><svg class="ic"><use href="#newc"/></svg>新建<i class="caret tight"></i></span>
    <svg class="ic x18"><use href="#close"/></svg>
    <svg class="ic"><use href="#dup"/></svg>
  </div>
  <div class="lsearch"><div class="linput">搜索构件...</div><div class="lbtn"><svg class="ic"><use href="#find"/></svg></div></div>
  <div class="ltree">
    <div class="lr0"><i class="chev"></i><i class="stub"></i><svg class="ti"><use href="#raft"/></svg>筏板基础</div>
    <div class="lr1"><span class="lsel"><svg class="gear"><use href="#gear"/></svg><span class="lat">FB-2</span></span></div>
  </div>
</section>

<section class="proppanel">
  <div class="ptitle">属性编辑器</div>
  <div class="ptable">
    <div class="ph0"></div><div class="ph1">属性名称</div>
    <div class="pn cur">1</div><div class="pc csel">名称</div>
    <div class="pn">2</div><div class="pc bl">混凝土强度等级</div>
    <div class="pn">3</div><div class="pc">厚度<span class="lat">(mm)</span></div>
    <div class="pn">4</div><div class="pc">顶标高<span class="lat">(m)</span></div>
    <div class="pn">5</div><div class="pc">底标高<span class="lat">(m)</span></div>
    <div class="pn">6</div><div class="pc">保护层厚度<span class="lat">(mm)</span></div>
    <div class="pn">7</div><div class="pc">马凳筋参数图</div>
    <div class="pn">8</div><div class="pc gr">马凳筋信息</div>
    <div class="pn">9</div><div class="pc">线形马凳筋方向</div>
    <div class="pn">10</div><div class="pc bl">拉筋</div>
    <div class="pn">11</div><div class="pc">拉筋数量计算方式</div>
    <div class="pn">12</div><div class="pc">马凳筋数量计算方式</div>
    <div class="pn">13</div><div class="pc bl">筏板侧面纵筋</div>
    <div class="pn">14</div><div class="pc bl"><span class="lat">U</span>形构造封边钢筋</div>
    <div class="pn">15</div><div class="pc bl"><span class="lat">U</span>形构造封边钢筋</div>
    <div class="pn">16</div><div class="pc">归类名称</div>
    <div class="pn">17</div><div class="pc">汇总信息</div>
    <div class="pn">18</div><div class="pc">备注</div>
    <div class="pn">19</div><div class="pc gr plus"><span class="pbox">+</span>显示样式</div>
  </div>
</section>
</body>
</html>
```
FILE: styles.css
```css
* { box-sizing: border-box; }
html, body { margin: 0; padding: 0; }
body {
  position: relative;
  width: 1568px;
  height: 831px;
  overflow: hidden;
  background: #f0f0f0;
  color: #222;
  font: 15px/20px "Noto Sans", "Noto Sans CJK SC", sans-serif;
}
i { font-style: normal; display: block; }
.defs { position: absolute; width: 0; height: 0; }

/* The reference is a slightly soft, upscaled capture */
.titlebar, .menubar, .tb1, .nav, .row, .listpanel, .proppanel { filter: blur(.35px); }
.dim { filter: blur(.4px); }

.ic { width: 20px; height: 20px; flex: none; display: block; margin-top: 3px; }
.w22 { width: 22px; }
.w18 { width: 18px; }
.it { display: inline-flex; align-items: center; gap: 5px; white-space: nowrap; flex: none; }
.off, .off .ic { color: #a9a9a9; }
.caret { width: 0; height: 0; flex: none; margin-left: 2px; border: 3.5px solid transparent; border-top: 4px solid #111; border-bottom: 0; }
.caret.off { border-top-color: #aaa; }
.caret.tight { margin-left: -2px; }
.sep { width: 1px; height: 22px; flex: none; background: #c4c4c4; margin: 0 -2px 0 -1px; transform: translateY(1.5px); }
.sep.s2 { margin: 0 0 0 -3px; }
.sep.s3 { margin: 0 -2px 0 -3px; }
.sep.s4 { margin: 0 -2px 0 -1px; }
.gripbar { width: 3px; height: 22px; flex: none; margin-right: -4px; transform: translateY(1.5px); background: repeating-linear-gradient(#9a9a9a 0 2px, transparent 2px 4px); }
.gb4 { margin-right: -8px; }
.more { font-size: 15px; font-weight: 700; line-height: 10px; align-self: flex-start; margin-top: 5px; color: #111; }

.titlebar { height: 22px; padding-left: 2px; background: #fff; font-size: 15px; letter-spacing: .2px; line-height: 13px; color: #222; white-space: nowrap; }

.menubar { height: 38px; display: flex; align-items: center; gap: 14px; margin-left: -16px; padding-bottom: 6px; color: #333; position: relative; }
.mi { flex: none; white-space: nowrap; }
.menubar .it { margin-left: -3px; }
.tip { position: absolute; left: 1410px; top: 2px; height: 36px; width: 200px; padding-left: 40px; line-height: 32px; color: #7c4c12; background: #f6f6f6; border-radius: 5px 0 0 0; white-space: nowrap; }

.tb1 { height: 37px; display: flex; }
.grp { display: flex; align-items: center; gap: 9px; background: #f6f6f6; flex: none; }
.tb1 .grp { padding-bottom: 6px; }
.g1a { width: 165px; padding-left: 10px; }
.g1a .caret { margin-left: -1px; }
.g1a .more { margin-left: 14px; }
.g1b { width: 879px; margin-left: 2px; padding-left: 4px; }
.g1b .more { margin-left: 12px; }
.g1c { margin-left: 2px; padding-left: 2px; flex: 1; }
.sigma { width: 20px; text-align: center; font-weight: 700; font-size: 17px; color: #111; }

.work { display: flex; height: 734px; }
.nav { width: 258px; flex: none; overflow: hidden; }
.navhead { height: 19px; width: 280px; margin-left: -23px; padding-right: 3px; display: flex; align-items: center; background: #0b57e2; color: #fff; line-height: 19px; }
.navhead span:first-child { flex: 1; }
.pin { width: 12px; height: 12px; margin-right: 10px; }
.navx { width: 14px; font-size: 18px; text-align: center; }
.navbtn { height: 28px; width: 280px; margin: 1px 0 0 -23px; text-align: center; line-height: 28px; font-size: 15px; color: #222; background: #f0f0f0; border: 1px solid #c8c8c8; border-width: 1px 2px 2px 0; }
.navbtn.dark { border-color: #aaa #888 #777 transparent; height: 27px; line-height: 26px; }
.navtools { height: 34px; position: relative; background: #f6f6f6; }
.navtools i { position: absolute; height: 3px; background: #0d3a3a; }
.d1 { left: 0; top: 18px; width: 4px; }
.d2 { left: 12px; top: 12px; width: 10px; }
.d3 { left: 19px; top: 20px; width: 13px; }
.tree { height: 624px; width: 257px; padding-top: 1px; background: #fff; border: 1px solid #a8a8a8; border-width: 1px 2px 0 0; font-size: 15px; line-height: 20px; }
.n0, .n1 { height: 20px; display: flex; align-items: center; position: relative; white-space: nowrap; }
.n0 { padding-left: 7px; gap: 6px; }
.n0::before { content: ""; position: absolute; left: 3px; top: 10px; width: 4px; border-top: 1px dotted #888; }
.n1 { padding-left: 32px; gap: 7px; }
.n1::before { content: ""; position: absolute; left: 18px; top: 0; width: 14px; height: 10px; border-left: 1px dotted #888; border-bottom: 1px dotted #888; }
.n1::after { content: ""; position: absolute; left: 18px; top: 10px; height: 10px; border-left: 1px dotted #888; }
.n1.last::after { display: none; }
.fi { width: 20px; height: 20px; flex: none; }
.ti { width: 18px; height: 18px; flex: none; display: block; }
.lat { font-family: "Liberation Mono", monospace; font-size: 13px; letter-spacing: -.3px; vertical-align: 1px; }
.sel { display: flex; align-items: center; gap: 7px; height: 20px; margin-left: -3px; padding: 0 5px 0 3px; background: #d4d4d4; }
.cadi { margin-left: 1px; }
.newtag { margin: -12px 0 0 -5px; padding: 0 1px; font: italic 700 10px/10px "Liberation Sans", sans-serif; background: #f6d800; color: #222; transform: rotate(-4deg); }

.main { flex: 1; min-width: 0; display: flex; flex-direction: column; }
.row { display: flex; padding-left: 7px; flex: none; }
.r2 { height: 33px; margin-bottom: 1px; }
.r3, .r4 { height: 35px; }
.r3 { margin-bottom: 1px; }
.r2 .grp { padding-bottom: 4px; }
.r3 .grp { padding-bottom: 6px; }
.r4 .grp { padding-bottom: 4px; }
.g2a { width: 985px; padding-left: 5px; }
.g3a { width: 707px; padding-left: 5px; }
.g3b { margin-left: 95px; flex: 1; padding-left: 2px; }
.g4a { flex: 1; padding-left: 5px; }
.combos { display: flex; gap: 4px; margin-left: -3px; }
.combo { display: flex; height: 28px; flex: none; margin-top: 4px; }
.cbox { background: #fff; padding-left: 2px; line-height: 24px; white-space: nowrap; }
.w55 { width: 55px; }
.w70 { width: 70px; }
.carr { width: 16px; background: #f1f1f1; display: flex; align-items: center; justify-content: center; }
.carr .caret { margin: 0; }
.c2d { height: 26px; margin: 3px -4px 0 0; }
.c2d .cbox { width: 62px; padding: 0 0 3px 3px; gap: 4px; }
.c2d .ic { margin-top: 3px; }
.c4 { margin: 4px -3px 0 -2px; }
.btn { height: 29px; padding: 0 4px 4px; gap: 4px; margin: 4px -5px 0; background: #d9ebf9; border: 1px solid #3c9ede; }
.b4 { margin: 3px -4px 0 0; padding-bottom: 3px; gap: 5px; }

.canvas { flex: 1; min-height: 0; margin-left: 6px; background: #000; }
.draw { display: block; width: 1304px; height: 629px; }
.gl { fill: none; stroke: #0a6c0a; stroke-width: 1; }
.glh { stroke-width: 1.3; }
.blue { fill: #0076ee; }
.rd path { fill: none; stroke-width: 1; }
.mg { fill: none; stroke: #ff00ff; stroke-width: 2.5; }
.ye { fill: none; stroke: #ffff00; stroke-width: 2.5; }
.mgv { fill: none; stroke: #f000f0; stroke-width: 3; }
.yev { fill: none; stroke: #f4f000; stroke-width: 3; }
.edge path { fill: none; }
.dash { fill: none; stroke: #fff; stroke-width: 1.500; stroke-dasharray: 6 4; }
.hw { fill: #fff; }
.hc { fill: #1fe0e0; }
.ho { fill: #ff8a10; }
.hk { fill: #000; }
.dim text { fill: #c6c6c6; font: 20px "Liberation Sans", sans-serif; text-anchor: middle; }

.listpanel { position: absolute; left: 257px; top: 204px; width: 313px; height: 463px; background: #fff; border: 1px solid #b0b0b0; border-width: 1px 2px 2px 1px; }
.ltitle { height: 33px; display: flex; align-items: center; justify-content: space-between; padding: 0 1px 0 3px; color: #aaa; }
.ltxt { margin-bottom: 4px; }
.lclose { width: 24px; height: 24px; background: #e8e8e8; color: #fff; font-size: 18px; line-height: 23px; text-align: center; }
.ltools { height: 32px; display: flex; align-items: center; gap: 9px; padding: 0 0 3px 4px; background: linear-gradient(#f8f8f8, #ececec); }
.x18 { width: 18px; height: 18px; }
.ltools .caret { margin-left: -1px; }
.lsearch { height: 34px; display: flex; background: #f0f0f0; padding: 1px 0 2px; }
.linput { width: 281px; height: 31px; border: 2px solid #a2a2a2; background: #fff; color: #aaa; padding-left: 2px; line-height: 23px; }
.lbtn { flex: 1; display: flex; align-items: center; justify-content: center; }
.lbtn .ic { margin-top: 0; }
.ltree { height: 361px; padding-top: 1px; border: 1px solid #a8a8a8; border-width: 1px 0 0 0; }
.lr0, .lr1 { height: 20px; display: flex; align-items: center; position: relative; }
.chev { width: 8px; height: 8px; margin: -4px 0 0 10px; border: solid #333; border-width: 0 2px 2px 0; transform: rotate(45deg); }
.stub { width: 5px; margin: 0 0 0 6px; border-top: 1px dotted #888; }
.lr0 .ti { margin-right: 6px; }
.lr1 { padding-left: 49px; }
.lr1::before { content: ""; position: absolute; left: 38px; top: 0; width: 11px; height: 10px; border-left: 1px dotted #666; border-bottom: 1px dotted #666; }
.lsel { width: 64px; height: 20px; display: flex; align-items: center; gap: 8px; padding-left: 5px; background: #316ac5; color: #000; }
.gear { width: 14px; height: 14px; flex: none; }

.proppanel { position: absolute; left: 1414px; top: 128px; width: 178px; height: 703px; padding-left: 3px; background: #fff; }
.ptitle { height: 34px; padding-left: 2px; line-height: 34px; color: #999; }
.ptable { display: grid; grid-template-columns: 25px 1fr; grid-template-rows: 30px repeat(19, 23.75px); border-top: 1px solid #bbb; }
.ph0, .ph1, .pn { background: #f1f1f1; border-right: 2px solid #d2d2d2; border-bottom: 2px solid #cfcfcf; }
.ph1 { background: linear-gradient(#fcfcfc, #eeeeee); text-align: center; line-height: 28px; color: #111; font-weight: 500; border-right: 0; }
.pn { font-family: "Liberation Mono", monospace; font-size: 12.5px; line-height: 25px; text-align: center; padding-right: 4px; color: #222; }
.pn.cur { background: #fcd28c; color: #800080; }
.pc { padding-left: 25px; line-height: 24px; white-space: nowrap; overflow: hidden; border-bottom: 2px solid #d6d6d6; }
.csel { background: #0078d7; color: #fff; }
.bl { color: #0000ee; }
.gr { color: #aaa; }
.plus { padding-left: 3px; display: flex; align-items: center; gap: 6px; }
.pbox { width: 16px; height: 16px; border: 1px solid #c0c0c0; color: #222; font: 16px/14px "Liberation Sans", sans-serif; text-align: center; }
```
